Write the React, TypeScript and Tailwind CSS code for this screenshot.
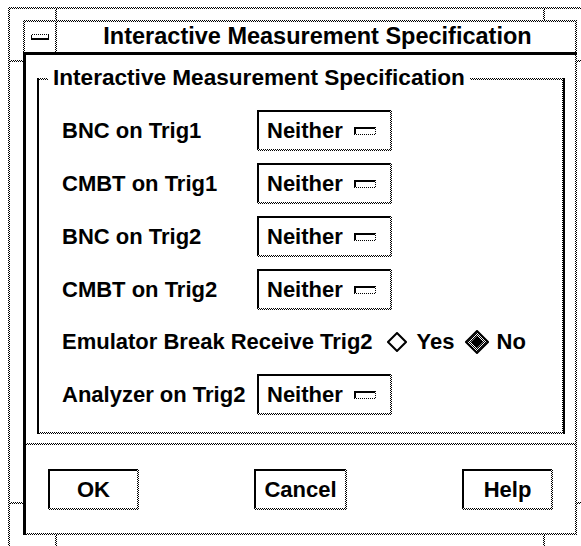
import React from 'react';

// 1-bit "50% gray" dither used by the Motif frame
const checker = 'bg-[image:repeating-conic-gradient(#000_0%_25%,#fff_0%_50%)] bg-[length:2px_2px]';

const ROWS = ['BNC on Trig1', 'CMBT on Trig1', 'BNC on Trig2', 'CMBT on Trig2'];

function VLine() {
  return <div className={`w-[2px] shrink-0 self-stretch ${checker}`} />;
}

function HLine() {
  return <div className={`h-[2px] shrink-0 ${checker}`} />;
}

function Indicator() {
  return (
    <div className={`w-[22px] h-[8px] pr-px pb-px ml-[11px] ${checker}`}>
      <div className="h-full bg-white border-l-2 border-t-2 border-black" />
    </div>
  );
}

function OptionMenu() {
  return (
    <div className={`w-[135px] h-[41px] pr-[2px] pb-[2px] ${checker}`}>
      <div className="h-full bg-white border-l-2 border-t-2 border-black flex items-center pl-[8px]">
        <span>Neither</span>
        <Indicator />
      </div>
    </div>
  );
}

function Button({ label, w }: { label: string; w: string }) {
  return (
    <div className={`${w} h-[41px] pr-[2px] pb-[2px] ${checker}`}>
      <div className="h-full bg-white border-l-2 border-t-2 border-black flex items-center justify-center">
        {label}
      </div>
    </div>
  );
}

function Diamond({ filled }: { filled?: boolean }) {
  if (!filled) {
    return (
      <svg width="20" height="20" viewBox="0 0 20 20" className="shrink-0">
        <polygon points="10,1 19,10 10,19 1,10" fill="#fff" stroke="#000" strokeWidth="2" />
      </svg>
    );
  }
  return (
    <svg width="24" height="24" viewBox="0 0 24 24" className="shrink-0">
      <defs>
        <pattern id="ck" width="2" height="2" patternUnits="userSpaceOnUse">
          <rect width="2" height="2" fill="#fff" />
          <rect width="1" height="1" fill="#000" />
          <rect x="1" y="1" width="1" height="1" fill="#000" />
        </pattern>
      </defs>
      <polygon points="12,1 23,12 12,23 1,12" fill="url(#ck)" stroke="#000" strokeWidth="2" />
      <polygon points="12,6 18,12 12,18 6,12" fill="#000" />
    </svg>
  );
}

export default function App() {
  return (
    <div className="w-[581px] h-[546px] overflow-hidden bg-white pl-[8px] pt-[7px] font-['Liberation_Sans',Arial,sans-serif] text-[22px] font-bold leading-none text-black">
      {/* outer window frame */}
      <div className={`w-[584px] h-[543px] p-[2px] ${checker}`}>
        <div className="h-full bg-white flex flex-col">
          {/* top frame strip */}
          <div className="flex h-[11px] shrink-0">
            <div className="w-[45px]" />
            <VLine />
            <div className="flex-1" />
            <VLine />
            <div className="w-[45px]" />
          </div>

          <div className="flex flex-1 min-h-0">
            {/* left frame strip */}
            <div className="w-[13px] flex flex-col shrink-0">
              <div className="h-[40px]" />
              <HLine />
              <div className="flex-1" />
              <HLine />
              <div className="h-[31px]" />
            </div>

            {/* main column */}
            <div className="w-[554px] flex flex-col shrink-0">
              {/* title bar */}
              <div className={`h-[35px] shrink-0 border-b-[3px] border-black pt-[2px] px-[2px] ${checker}`}>
                <div className="h-full bg-white flex">
                  <div className="w-[30px] flex items-center justify-center">
                    <div className={`w-[18px] h-[6px] pt-px ${checker}`}>
                      <div className="h-full bg-white border-l border-r border-b-2 border-black" />
                    </div>
                  </div>
                  <VLine />
                  <div className="flex-1 flex items-center justify-center pl-[3px] text-[23.5px]">
                    Interactive Measurement Specification
                  </div>
                </div>
              </div>

              {/* client area */}
              <div className={`flex-1 border-l-[3px] border-black pr-[2px] pb-[2px] ${checker}`}>
                <div className="h-full bg-white flex flex-col">
                  <div className="pt-[23px] pl-[11px] pr-[10px] pb-[9px]">
                    <div className={`relative border-l-2 border-r-2 border-black pt-[2px] pb-[2px] pr-px ${checker}`}>
                      <div className="absolute left-[9px] top-[-11px] bg-white px-[5px] text-[22.6px]">
                        Interactive Measurement Specification
                      </div>
                      <div className="bg-white pt-[24px] pl-[23px] pb-[11px] flex flex-col">
                        {ROWS.map(r => (
                          <div key={r} className="flex items-center h-[53px]">
                            <div className="w-[195px]">{r}</div>
                            <OptionMenu />
                          </div>
                        ))}
                        <div className="flex items-center h-[52px]">
                          <span>Emulator Break Receive Trig2</span>
                          <div className="ml-[14px]"><Diamond /></div>
                          <span className="ml-[10px]">Yes</span>
                          <div className="ml-[10px]"><Diamond filled /></div>
                          <span className="ml-[8px]">No</span>
                        </div>
                        <div className="flex items-center h-[53px]">
                          <div className="w-[195px]">Analyzer on Trig2</div>
                          <OptionMenu />
                        </div>
                      </div>
                    </div>
                  </div>

                  <HLine />

                  {/* action buttons */}
                  <div className="flex-1 flex justify-between items-start pt-[24px] px-[22px]">
                    <Button label="OK" w="w-[91px]" />
                    <Button label="Cancel" w="w-[93px]" />
                    <Button label="Help" w="w-[91px]" />
                  </div>
                </div>
              </div>
            </div>

            {/* right frame strip */}
            <div className="w-[13px] flex flex-col shrink-0">
              <div className="h-[40px]" />
              <HLine />
              <div className="flex-1" />
              <HLine />
              <div className="h-[31px]" />
            </div>
          </div>

          {/* bottom frame strip */}
          <div className="flex h-[13px] shrink-0">
            <div className="w-[45px]" />
            <VLine />
            <div className="flex-1" />
            <VLine />
            <div className="w-[45px]" />
          </div>
        </div>
      </div>
    </div>
  );
}
